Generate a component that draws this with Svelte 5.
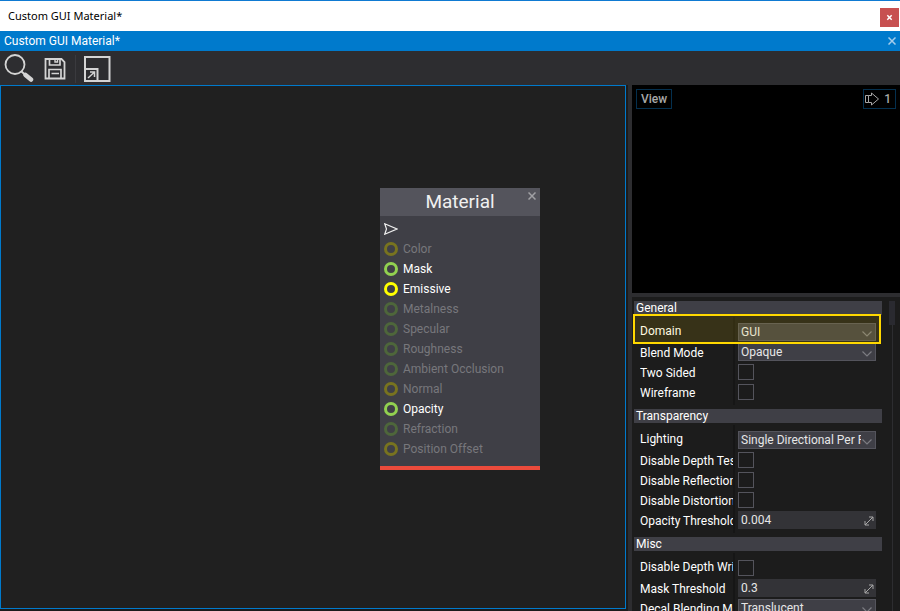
<script>
  const slots = [
    { name: 'Color', tone: 'yellow', on: false },
    { name: 'Mask', tone: 'green', on: true },
    { name: 'Emissive', tone: 'yellow', on: true },
    { name: 'Metalness', tone: 'green', on: false },
    { name: 'Specular', tone: 'green', on: false },
    { name: 'Roughness', tone: 'green', on: false },
    { name: 'Ambient Occlusion', tone: 'green', on: false },
    { name: 'Normal', tone: 'yellow', on: false },
    { name: 'Opacity', tone: 'green', on: true },
    { name: 'Refraction', tone: 'green', on: false },
    { name: 'Position Offset', tone: 'yellow', on: false }
  ];

  const groups = [
    {
      title: 'General',
      marked: true,
      rows: [
        { id: 'domain', label: 'Domain', kind: 'select', value: 'GUI' },
        { id: 'blend', label: 'Blend Mode', kind: 'select', value: 'Opaque' },
        { id: 'two-sided', label: 'Two Sided', kind: 'check' },
        { id: 'wireframe', label: 'Wireframe', kind: 'check' }
      ]
    },
    {
      title: 'Transparency',
      rows: [
        { id: 'lighting', label: 'Lighting', kind: 'select', value: 'Single Directional Per Pixel' },
        { id: 'depth-test', label: 'Disable Depth Test', kind: 'check' },
        { id: 'reflections', label: 'Disable Reflections', kind: 'check' },
        { id: 'distortion', label: 'Disable Distortion', kind: 'check' },
        { id: 'opacity', label: 'Opacity Threshold', kind: 'number', value: '0.004' }
      ]
    },
    {
      title: 'Misc',
      rows: [
        { id: 'depth-write', label: 'Disable Depth Write', kind: 'check' },
        { id: 'mask', label: 'Mask Threshold', kind: 'number', value: '0.3' },
        { id: 'decal', label: 'Decal Blending Mode', kind: 'select', value: 'Translucent' }
      ]
    }
  ];
</script>

<div class="window">
  <header class="titlebar">
    <span>Custom GUI Material*</span>
    <button class="close" aria-label="Close window">
      <svg width="7" height="7" viewBox="0 0 7 7"><path d="M1.300 1.300l4.400 4.400M5.700 1.300L1.300 5.700" stroke="#fff" stroke-width="1.500" fill="none" /></svg>
    </button>
  </header>

  <div class="tabbar">
    <span>Custom GUI Material*</span>
    <button class="tabclose" aria-label="Close tab">
      <svg width="8" height="8" viewBox="0 0 8 8"><path d="M.5.5l7 7M7.500.5l-7 7" stroke="#a5cdeb" stroke-width="1.5" /></svg>
    </button>
  </div>

  <nav class="toolbar">
    <button aria-label="Show in content">
      <svg width="30" height="30" viewBox="0 0 30 30" fill="none" stroke="#d4d4d4">
        <circle cx="11" cy="10.500" r="9.500" stroke-width="1.800" />
        <path d="M17.500 17.500l4 3.500" stroke-width="2" />
        <path d="M21.500 21l5.500 4.500" stroke-width="4.500" stroke-linecap="round" />
      </svg>
    </button>
    <button aria-label="Save">
      <svg width="30" height="30" viewBox="0 0 30 30" fill="none" stroke="#d4d4d4" stroke-width="1.800">
        <path d="M5.500 5h16L24.500 8v16.500h-19z" />
        <path d="M9.500 5v6h10.500V5" stroke-width="1.700" />
        <path d="M15 5v3h2.500V5" stroke-width="1.400" />
        <path d="M9 24.500v-9h12v9M11.500 19.500h7.500" stroke-width="1.700" />
      </svg>
    </button>
    <i class="divider"></i>
    <button aria-label="Show whole graph">
      <svg width="30" height="30" viewBox="0 0 30 30" fill="none" stroke="#d4d4d4" stroke-width="2">
        <path d="M3 3h24.500v24H3z" />
        <path d="M3 15h12.500v12" />
        <path d="M6 24l6-5.500M8 18h4.500v5" stroke-width="1.500" />
      </svg>
    </button>
  </nav>

  <main class="content">
    <section class="canvas" aria-label="Material graph">
      <article class="node">
        <h2>Material</h2>
        <button class="nodeclose" aria-label="Delete node">
          <svg width="8" height="8" viewBox="0 0 8 8"><path d="M.5.5l7 7M7.500.5l-7 7" stroke="#a0a0a4" stroke-width="1.500" /></svg>
        </button>
        <ul>
          <li>
            <svg width="14" height="12" viewBox="0 0 14 12"><path d="M.7.800L13 6 .7 11.200 2.500 6z" fill="none" stroke="#f0f0f0" stroke-width="1.200" /></svg>
          </li>
          {#each slots as slot}
            <li class:off={!slot.on}><i class="ring {slot.tone}"></i>{slot.name}</li>
          {/each}
        </ul>
      </article>
    </section>

    <aside>
      <div class="preview">
        <button>View</button>
        <button class="speed" aria-label="Camera speed 1">
          <svg width="15" height="14" viewBox="0 0 15 14" fill="none" stroke="#a8a8a8">
            <path d="M3.500 3.500H6.500V1L13.500 7 6.500 13V10.500H3.500zM.5 3.500H3.500M.5 10.500H3.500M.5 3.500v7" />
          </svg>
          1
        </button>
      </div>

      <div class="props">
        <div class="list">
          {#each groups as group}
            <fieldset>
              <legend>{group.title}</legend>
              <div class="table">
                {#if group.marked}<div class="mark"></div>{/if}
                <div class="labels">
                  {#each group.rows as row}<label for={row.id}>{row.label}</label>{/each}
                </div>
                <div class="controls">
                  {#each group.rows as row}
                    <div class="control">
                      {#if row.kind === 'select'}
                        <select id={row.id}><option>{row.value}</option></select>
                        <svg class="hint" width="10" height="6" viewBox="0 0 10 6"><path d="M.5.5L5 5 9.500.5" fill="none" stroke="#7c7c82" stroke-width="1.200" /></svg>
                      {:else if row.kind === 'check'}
                        <input type="checkbox" id={row.id} />
                      {:else}
                        <input type="text" id={row.id} value={row.value} />
                        <svg class="hint" width="10" height="10" viewBox="0 0 10 10"><path d="M1 9l8-8M5 1h4v4M1 5v4h4" fill="none" stroke="#a8a8a8" /></svg>
                      {/if}
                    </div>
                  {/each}
                </div>
              </div>
            </fieldset>
          {/each}
        </div>
        <div class="scroll"><i></i></div>
      </div>
    </aside>
  </main>
</div>

<style>
  :global(body) {
    margin: 0;
    background: #1c1c1c;
  }
  .window, .window * {
    box-sizing: border-box;
  }
  .window {
    display: flex;
    flex-direction: column;
    height: 100vh;
    overflow: hidden;
    color: #fff;
    background: #2d2d30;
    font: 12px/16px Roboto, sans-serif;
  }
  button {
    display: flex;
    align-items: center;
    justify-content: center;
    padding: 0;
    border: 0;
    color: inherit;
    background: none;
    font: inherit;
  }
  svg {
    display: block;
    flex: none;
  }
  .titlebar {
    display: flex;
    flex: none;
    align-items: center;
    justify-content: space-between;
    height: 31px;
    padding: 0 1px 0 8px;
    border-top: 1px solid #0f7ad2;
    color: #000;
    background: #fff;
    font-family: "Noto Sans", sans-serif;
    font-size: 11px;
  }
  .close {
    width: 19px;
    height: 19px;
    margin-top: 3px;
    background: #c75050;
  }
  .tabbar {
    display: flex;
    flex: none;
    align-items: center;
    justify-content: space-between;
    height: 20px;
    padding: 0 4px;
    background: #007acc;
  }
  .toolbar {
    display: flex;
    flex: none;
    gap: 6px;
    height: 34px;
    padding: 4px 4px 2px;
    align-items: center;
  }
  .divider {
    width: 1px;
    height: 28px;
    margin-left: -1px;
    background: #3a3a3e;
  }
  .content {
    display: grid;
    flex: 1;
    grid-template-columns: minmax(0, 1fr) 272px;
    min-height: 0;
    background: #1c1c1c;
  }
  .canvas {
    position: relative;
    margin: 0 2px 2px 0;
    border: 1px solid #007acc;
    background: #202020;
  }
  .node {
    position: absolute;
    top: 102px;
    left: 379px;
    width: 160px;
    border-bottom: 4px solid #eb4b3c;
    background: #3f3f46;
  }
  h2 {
    margin: 0;
    background: #54545c;
    font-size: 19px;
    font-weight: 400;
    line-height: 28px;
    text-align: center;
    color: #f0f0f0;
  }
  .nodeclose {
    position: absolute;
    top: 4px;
    right: 4px;
  }
  ul {
    margin: 0;
    padding: 3px 4px 7px;
    list-style: none;
  }
  li {
    display: flex;
    align-items: center;
    gap: 5px;
    height: 20px;
  }
  .off {
    color: #77777c;
  }
  .ring {
    width: 14px;
    height: 14px;
    border: 3px solid #ff0;
    border-radius: 50%;
  }
  .ring.green {
    border-color: #92d050;
  }
  .off .ring {
    border-color: #78731f;
  }
  .off .ring.green {
    border-color: #4e663b;
  }
  aside {
    display: flex;
    flex-direction: column;
    min-height: 0;
    border-left: 4px solid #2d2d30;
  }
  .preview {
    display: flex;
    flex: none;
    align-items: flex-start;
    justify-content: space-between;
    height: 208px;
    padding: 4px;
    background: #000;
  }
  .preview button {
    height: 20px;
    padding: 0 4px;
    gap: 4px;
    border: 1px solid #04304f;
    color: #a8a8a8;
    font-weight: 500;
  }
  .preview .speed {
    padding: 0 4px 0 1px;
  }
  .props {
    display: flex;
    flex: 1;
    justify-content: space-between;
    min-height: 0;
    padding: 4px 5px 0 2px;
    border-top: 4px solid #2d2d30;
    overflow: hidden;
  }
  .list {
    flex: 1;
    min-width: 0;
  }
  .scroll {
    display: flex;
    justify-content: center;
    width: 6px;
    margin-left: 7px;
    background: linear-gradient(90deg, transparent 3px, #2d2d30 3px, #2d2d30 4px, transparent 4px);
  }
  .scroll i {
    width: 6px;
    height: 24px;
    background: #2a2a30;
  }
  fieldset {
    min-width: 0;
    margin: 0;
    padding: 0;
    border: 0;
  }
  legend {
    display: block;
    width: 100%;
    height: 14px;
    padding: 0 2px;
    background: #3f3f46;
    line-height: 14px;
  }
  .table {
    position: relative;
    display: flex;
    padding: 2px 6px 4px;
  }
  .labels {
    flex: none;
    width: 95px;
    padding-top: 4px;
    border-right: 2px solid #161616;
    overflow: hidden;
  }
  label {
    display: block;
    line-height: 20px;
    white-space: nowrap;
  }
  label:first-child {
    margin-bottom: 2px;
  }
  .controls {
    display: flex;
    flex: 1;
    flex-direction: column;
    gap: 2px;
    min-width: 0;
    padding: 6px 0 4px 3px;
  }
  .control {
    position: relative;
    display: flex;
    align-items: center;
    height: 18px;
  }
  select, input[type="text"] {
    width: 100%;
    height: 18px;
    margin: 0;
    border: 1px solid #54545c;
    border-radius: 0;
    padding: 0 14px 0 2px;
    appearance: none;
    color: #e6e6e6;
    background: #3f3f46;
    font: 12px/16px Roboto, sans-serif;
  }
  input[type="text"] {
    border-color: #333337;
    background: #333337;
  }
  input[type="checkbox"] {
    width: 16px;
    height: 16px;
    margin: 0;
    border: 1px solid #54545c;
    appearance: none;
  }
  .hint {
    position: absolute;
    top: 8px;
    right: 4px;
    pointer-events: none;
  }
  input + .hint {
    top: 5px;
    right: 2px;
  }
  .mark {
    position: absolute;
    z-index: 1;
    top: -1px;
    right: 1px;
    left: -1px;
    height: 30px;
    border: 2px solid #ffd800;
    background: rgba(255, 216, 0, 0.12);
    pointer-events: none;
  }
</style>
